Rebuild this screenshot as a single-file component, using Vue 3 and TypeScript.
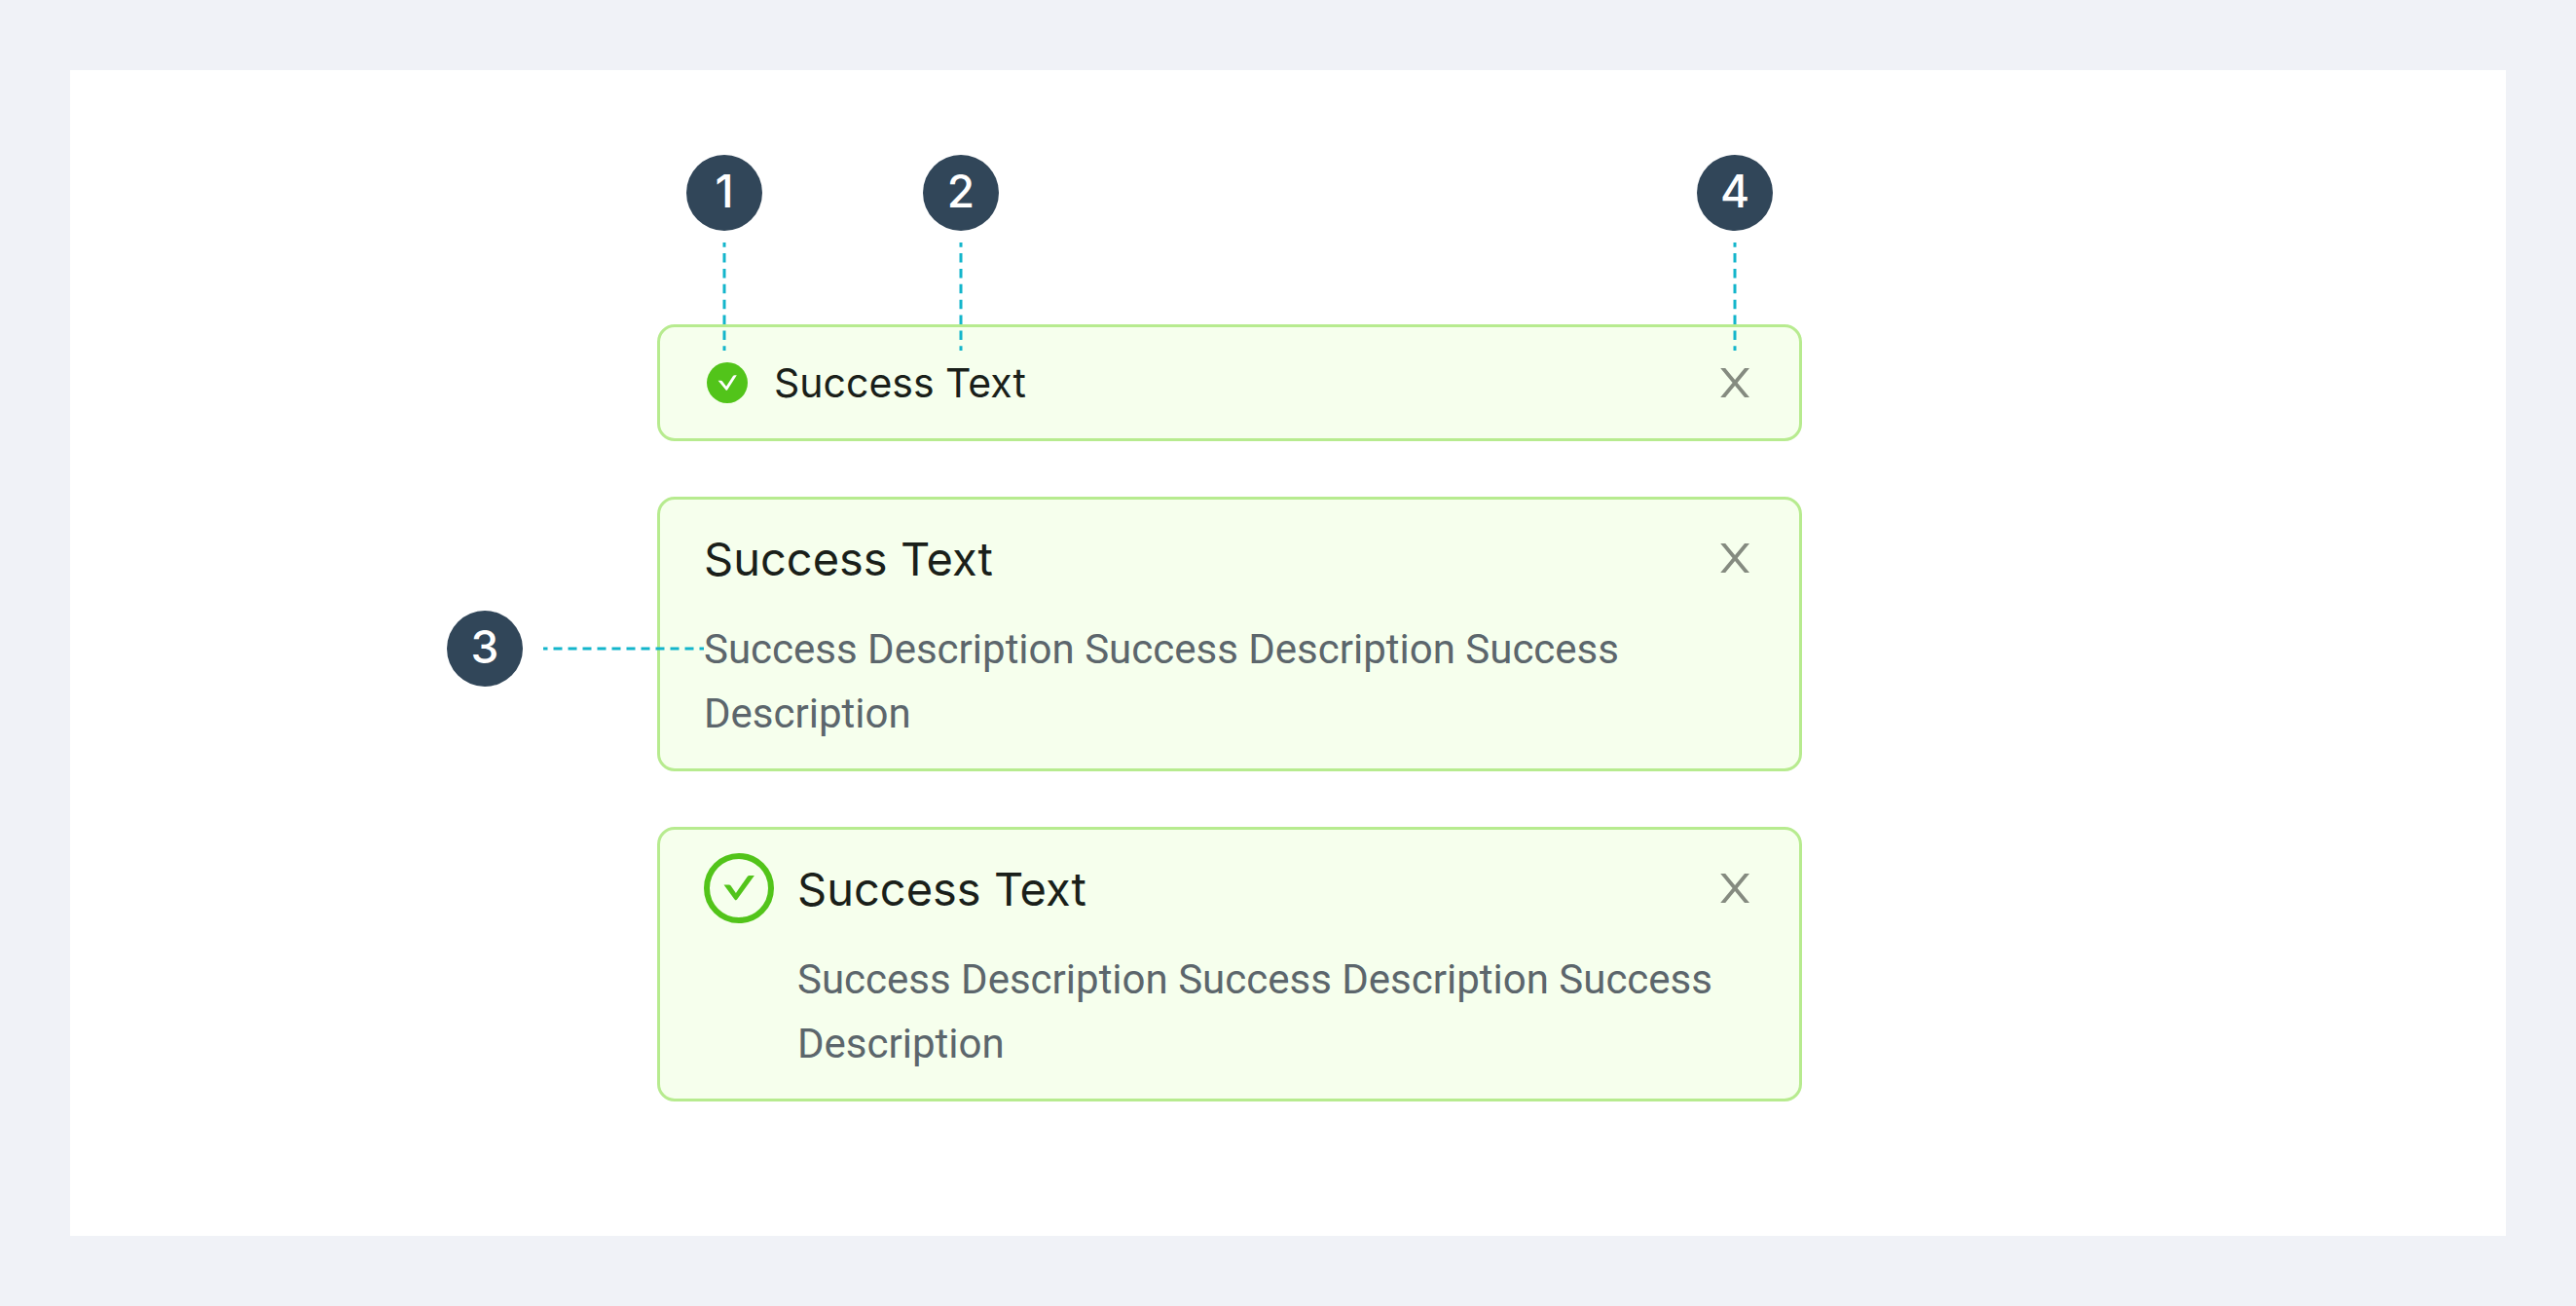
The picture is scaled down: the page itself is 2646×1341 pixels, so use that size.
<script setup lang="ts">
interface AlertItem {
  id: string
  title: string
  description?: string
  icon?: 'filled' | 'outlined'
  marker?: number
}

const description = 'Success Description Success Description Success Description'

const markers: number[] = [1, 2, 4]

const alerts: AlertItem[] = [
  { id: 'simple', title: 'Success Text', icon: 'filled' },
  { id: 'described', title: 'Success Text', description, marker: 3 },
  { id: 'described-icon', title: 'Success Text', description, icon: 'outlined' },
]
</script>

<template>
  <main class="page">
    <section class="panel">
      <div class="figure">
        <div class="markers">
          <div v-for="n in markers" :key="n" class="marker">
            <span class="badge">{{ n }}</span>
            <svg class="leader-down" viewBox="0 0 4 111" aria-hidden="true">
              <path d="M2 0V111" pathLength="70" class="dash" />
            </svg>
          </div>
        </div>

        <div class="alerts">
          <article
            v-for="item in alerts"
            :key="item.id"
            class="alert"
            :class="{ large: item.description }"
            role="status"
          >
            <svg v-if="item.icon === 'filled'" class="icon-small" viewBox="0 0 48 48" aria-hidden="true">
              <circle cx="24" cy="24" r="21" fill="#52c41a" />
              <path d="M14.6 21.8h3q.9 0 1.400.7l4 5.200 6.800-10.400q.7-1 1.800-1h2.200L24.200 31.200q-.9 1.200-1.800 0Z" fill="#fff" />
            </svg>
            <svg v-if="item.icon === 'outlined'" class="icon-large" viewBox="0 0 72 72" aria-hidden="true">
              <circle cx="36" cy="36" r="33" fill="none" stroke="#52c41a" stroke-width="6" />
              <path d="M20.500 32.600h5.200q1.300 0 2 1L32.900 41 44.600 24.200q.9-1.300 2.300-1.300h5L34.100 47.600q-1.300 1.600-2.600 0Z" fill="#52c41a" />
            </svg>

            <div class="content">
              <h2 class="title">{{ item.title }}</h2>
              <div v-if="item.description" class="details">
                <p class="description">{{ item.description }}</p>
                <div v-if="item.marker" class="marker-side">
                  <span class="badge">{{ item.marker }}</span>
                  <svg class="leader-across" viewBox="0 0 165 4" aria-hidden="true">
                    <path d="M0 2H165" pathLength="110" class="dash" />
                  </svg>
                </div>
              </div>
            </div>

            <button class="close" type="button" aria-label="Close">
              <svg viewBox="0 0 42 42" aria-hidden="true">
                <path d="M6.200 6h5L21.100 17.900 31 6H36L23.600 21 36 36h-5L21.100 24.100 11.200 36H6.200L18.600 21Z" fill="#858b80" />
              </svg>
            </button>
          </article>
        </div>
      </div>
    </section>
  </main>
</template>

<style>
body {
  margin: 0;
  background: #f0f2f7;
}
</style>

<style scoped>
.page {
  box-sizing: border-box;
  min-height: 100vh;
  padding: 72px;
  display: flex;
}

.panel {
  flex: 1;
  box-sizing: border-box;
  padding: 87px 0 138px;
  background: #fff;
  display: grid;
  grid-template-columns: 603fr minmax(0, 1176px) 723fr;
  align-items: start;
}

.figure {
  grid-column: 2;
}

.markers {
  position: relative;
  z-index: 1;
  display: flex;
  gap: 165px;
  padding: 0 30px;
  margin-bottom: -27px;
  pointer-events: none;
}

.marker {
  display: flex;
  flex-direction: column;
  align-items: center;
  gap: 12px;
}

.marker:last-child {
  margin-left: auto;
}

.badge {
  width: 78px;
  height: 78px;
  border-radius: 50%;
  background: #314659;
  color: #fff;
  font: 500 46px/75px Inter, sans-serif;
  text-align: center;
}

.leader-down {
  display: block;
  width: 4px;
  height: 111px;
}

.leader-across {
  display: block;
  width: 165px;
  height: 4px;
}

.dash {
  fill: none;
  stroke: #13b5cb;
  stroke-width: 3;
  stroke-dasharray: 6 4;
  stroke-dashoffset: 3;
}

.alerts {
  display: flex;
  flex-direction: column;
  gap: 57px;
}

.alert {
  display: flex;
  align-items: center;
  gap: 24px;
  padding: 24px 45px;
  border: 3px solid #b7eb8f;
  border-radius: 18px;
  background: #f6ffed;
}

.alert.large {
  align-items: flex-start;
  padding-bottom: 23px;
}

.icon-small {
  flex: none;
  width: 48px;
  height: 48px;
}

.icon-large {
  flex: none;
  width: 72px;
  height: 72px;
}

.content {
  flex: 1;
  min-width: 0;
}

.title {
  margin: 0;
  color: #1a1f1a;
  font: 400 41px/66px Inter, sans-serif;
}

.large .title {
  font-size: 47px;
  line-height: 74px;
}

.details {
  position: relative;
  margin-top: 23px;
}

.description {
  margin: 0;
  color: #5c666c;
  font: 400 42px/66px Roboto, sans-serif;
}

.marker-side {
  position: absolute;
  top: 0;
  right: 100%;
  height: 64px;
  display: flex;
  align-items: center;
  gap: 21px;
}

.close {
  flex: none;
  width: 42px;
  height: 66px;
  padding: 0;
  border: 0;
  background: none;
  display: flex;
  align-items: center;
  cursor: pointer;
}

.large .close {
  height: 72px;
}

.large .content {
  margin-right: -24px;
}

.close svg {
  display: block;
  width: 42px;
  height: 42px;
}
</style>
